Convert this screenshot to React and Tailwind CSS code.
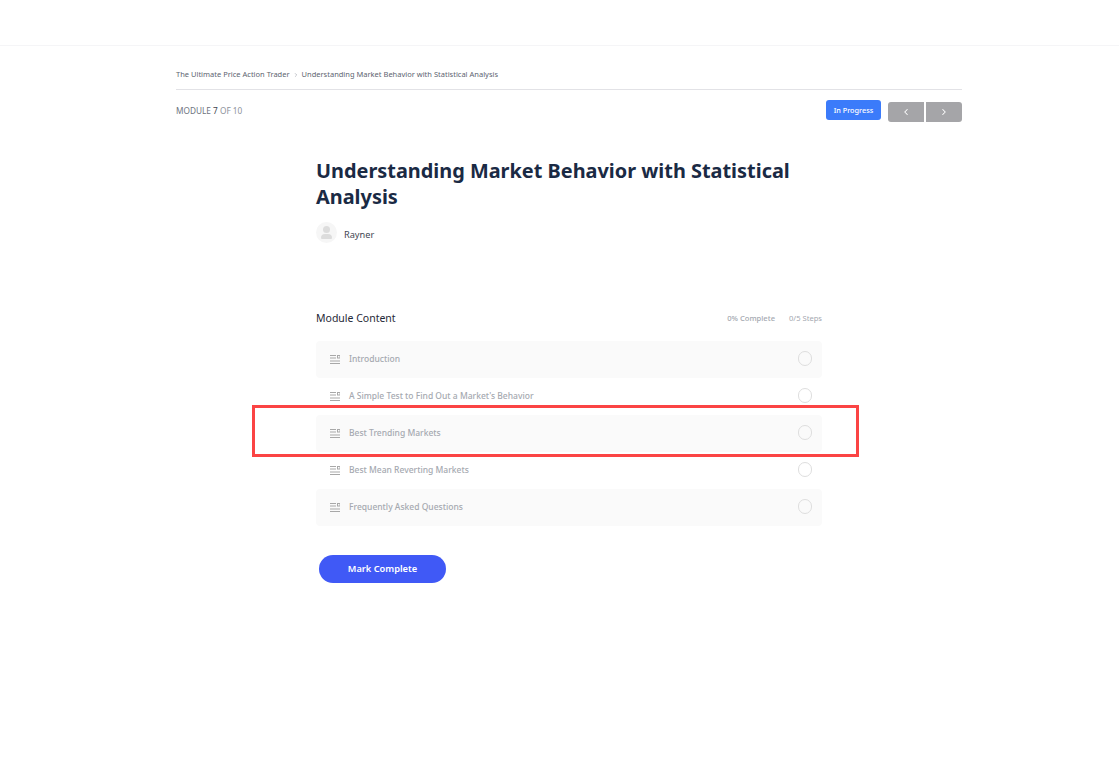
import { ChevronLeft, ChevronRight } from "lucide-react";

const steps = [
  "Introduction",
  "A Simple Test to Find Out a Market's Behavior",
  "Best Trending Markets",
  "Best Mean Reverting Markets",
  "Frequently Asked Questions",
];

const StepIcon = () => (
  <svg width="10" height="9" viewBox="0 0 10 9" fill="none" stroke="#a8a8a8" strokeWidth="1">
    <path d="M0 .5h6M0 3h6M0 6h10M0 8.5h10" />
    <rect x="7.5" y=".5" width="2.5" height="2.5" />
  </svg>
);

const App = () => {
  return (
    <div className="relative min-h-[763px] bg-white font-['Noto_Sans',sans-serif]">
      {/* Top bar */}
      <div className="h-[46px] border-b border-[#f5f5f7]" />

      <div className="ml-[176px] w-[786px]">
        {/* Breadcrumb */}
        <div className="flex h-[44px] items-center gap-[3px] border-b border-[#e2e2e6] pt-[15px] text-[7.5px] text-[#5d6470]">
          <span>The Ultimate Price Action Trader</span>
          <ChevronRight size={6} className="text-[#8a8f98]" />
          <span>Understanding Market Behavior with Statistical Analysis</span>
        </div>

        {/* Module row */}
        <div className="mt-[9px] flex h-[22px] items-center justify-between">
          <div className="pt-[3px] text-[8.25px] text-[#6e7480]">
            MODULE <span className="text-[#3d4450]">7</span> <span className="text-[#8d929b]">OF 10</span>
          </div>
          <div className="flex items-center gap-[7px]">
            <div className="flex h-[20px] w-[55px] items-center justify-center rounded-[3px] bg-[#3b7bfa] text-[7.3px] font-medium text-white">
              In Progress
            </div>
            <div className="mt-[3px] flex gap-[2px]">
              <div className="flex h-[20px] w-[36px] items-center justify-center rounded-l-[3px] bg-[#a5a5a8] text-white">
                <ChevronLeft size={10} strokeWidth={2.5} />
              </div>
              <div className="flex h-[20px] w-[36px] items-center justify-center rounded-r-[3px] bg-[#a5a5a8] text-white">
                <ChevronRight size={10} strokeWidth={2.5} />
              </div>
            </div>
          </div>
        </div>

        {/* Main column */}
        <div className="ml-[140px] w-[506px]">
          <h1 className="mt-[37px] text-[19.9px] leading-[26px] font-bold text-[#1a2a44]">
            Understanding Market Behavior with Statistical Analysis
          </h1>

          <div className="mt-[12px] flex items-center gap-[7px]">
            <div className="flex h-[21px] w-[21px] flex-col items-center justify-center rounded-full bg-[#f6f6f6]">
              <div className="h-[7px] w-[7px] rounded-full bg-[#dcdcdc]" />
              <div className="mt-[1px] h-[5px] w-[11px] rounded-t-[4px] rounded-b-[1px] bg-[#dcdcdc]" />
            </div>
            <span className="pt-[4px] text-[9.2px] text-[#3f4652]">Rayner</span>
          </div>

          <div className="mt-[68px] flex items-center justify-between">
            <span className="text-[10.5px] text-[#1f2937]">Module Content</span>
            <div className="flex gap-[14px] text-[7.6px] text-[#a4a8b0]">
              <span className="font-medium">0% Complete</span>
              <span>0/5 Steps</span>
            </div>
          </div>

          {/* Steps */}
          <div className="mt-[14px]">
            {steps.map((step, index) => (
              <div
                key={step}
                className={`flex h-[37px] items-center justify-between rounded-[4px] pr-[10px] pl-[14px] ${index % 2 === 0 ? "bg-[#fafafa]" : ""}`}
              >
                <div className="flex items-center gap-[9px]">
                  <StepIcon />
                  <span className="text-[8.5px] font-medium text-[#a5a9b0]">{step}</span>
                </div>
                <div className="mb-[2px] h-[14.5px] w-[14.5px] rounded-full border border-[#dedede]" />
              </div>
            ))}
          </div>

          <button className="mt-[29px] ml-[3px] flex h-[28px] w-[127px] items-center justify-center rounded-full bg-[#4059f6] pt-[1px] text-[9.25px] font-semibold text-white">
            Mark Complete
          </button>
        </div>
      </div>

      {/* Highlight box */}
      <div className="absolute top-[405px] left-[252px] h-[52px] w-[607px] border-[3px] border-[#fb4444]" />
    </div>
  );
};

export default App;
